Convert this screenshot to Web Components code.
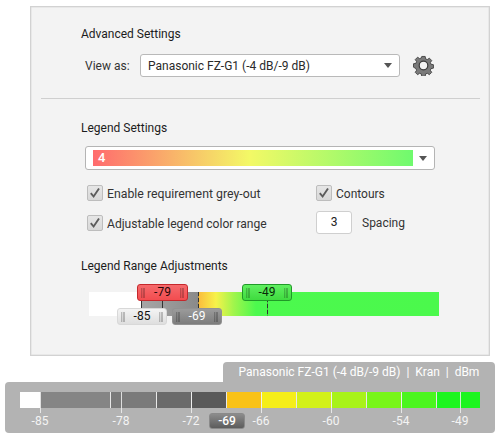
<!DOCTYPE html>
<html><head><meta charset="utf-8">
<style>
html,body{margin:0;padding:0;background:#fff}
body{width:500px;height:439px;overflow:hidden;font:12px Roboto,sans-serif;color:#222}
</style></head><body>
<settings-panel>
  <section-title style="margin:0 0 0 50px">Advanced Settings</section-title>
  <view-row></view-row>
  <hr-line></hr-line>
  <section-title style="margin:0 0 0 50px">Legend Settings</section-title>
  <legend-select></legend-select>
  <option-grid></option-grid>
  <section-title style="margin:0 0 0 50px">Legend Range Adjustments</section-title>
  <range-adjust></range-adjust>
</settings-panel>
<legend-dock></legend-dock>
<script>
function def(name,html,init){
  customElements.define(name,class extends HTMLElement{
    constructor(){super();this.attachShadow({mode:'open'}).innerHTML=typeof html==='function'?html(this):html;}
    connectedCallback(){if(init)init(this)}
  });
}
const arrow='<svg width="8" height="5" viewBox="0 0 8 5"><path d="M0 0H8L4 5Z" fill="#555"/></svg>';
def('settings-panel',`<style>:host{display:block;box-sizing:border-box;width:460px;height:350px;margin:6px 0 0 30px;padding:20px 0 0;background:#f3f3f3;border:1px solid #d2d2d2;box-shadow:inset 0 0 0 .5px #ddd}</style><slot></slot>`);
def('section-title',`<style>:host{display:block;line-height:15px;height:15px;color:#1c1c1c}</style><slot></slot>`);
def('view-row',`<style>:host{display:flex;align-items:center;height:23px;margin:12px 0 0 54px;color:#333}
.l{width:55px}
.s{box-sizing:border-box;width:260px;height:23px;background:#fff;border:1px solid #b9b9b9;border-radius:3px;display:flex;align-items:center;justify-content:space-between;padding:0 7px 0 7px;color:#2a2a2a}
svg.g{margin:-1px 0 0 13px}</style>
<span class="l">View as:</span><div class="s"><span>Panasonic FZ-G1 (-4 dB/-9 dB)</span>${arrow}</div>
<svg class="g" width="21" height="21" viewBox="0 0 21 21"><path d="M8.7 1h3.6l.5 2.6 1.7.7 2.2-1.5 2.5 2.5-1.5 2.2.7 1.7 2.6.5v3.6l-2.6.5-.7 1.7 1.5 2.2-2.5 2.5-2.2-1.5-1.7.7-.5 2.6H8.7l-.5-2.6-1.7-.7-2.2 1.5-2.5-2.5 1.5-2.2-.7-1.7L0 12.3V8.7l2.6-.5.7-1.7L1.8 4.3l2.5-2.5 2.2 1.5 1.7-.7z" fill="#7a7a7a" stroke="#3c3c3c" stroke-width=".9" transform="translate(.5 .5) scale(.95)"/><circle cx="10.5" cy="10.5" r="4.3" fill="#f3f3f3" stroke="#3c3c3c" stroke-width="1.2"/></svg>`);
def('hr-line',`<style>:host{display:block;height:1px;background:#cfcfcf;margin:21px 9px 22px 10px}</style>`);
def('legend-select',`<style>:host{box-sizing:border-box;display:flex;align-items:center;width:350px;height:24px;margin:10px 0 0 54px;padding:0 7px 0 7px;background:#fff;border:1px solid #b4b4b4;border-radius:3px;justify-content:space-between}
.g{width:320px;height:16px;line-height:16px;background:linear-gradient(90deg,#ff6b6e 0,#f3f966 49%,#6ffa6e 100%);color:#fff;font-weight:500;font-size:13px;padding-left:5px;box-sizing:border-box}</style><div class="g">4</div>${arrow}`);
def('check-box',`<style>:host{display:flex;align-items:center;gap:4px;height:16px;color:#333}
span{padding-top:2px}
.b{box-sizing:border-box;width:16px;height:16px;background:linear-gradient(#e6e6e6,#d8d8d8);border:1px solid #bdbdbd;border-radius:2px;display:block}</style>
<svg class="b" viewBox="0 0 14 14"><path d="M2.8 7.2l2.8 3.3 5.4-8" fill="none" stroke="#5c5c5c" stroke-width="1.9"/></svg><span><slot></slot></span>`);
def('option-grid',`<style>:host{display:grid;grid-template-columns:229px auto;grid-template-rows:16px 23px;row-gap:10px;margin:15px 0 25px 56px;align-items:center}
.n{display:flex;align-items:center;gap:10px;color:#333}
.i{box-sizing:border-box;width:36px;height:23px;line-height:21px;text-align:center;background:#fff;border:1px solid #cfcfcf;border-radius:3px;color:#222}</style>
<check-box style="font-size:12.3px">Enable requirement grey-out</check-box><check-box>Contours</check-box>
<check-box style="font-size:12.1px">Adjustable legend color range</check-box><div class="n"><div class="i">3</div><span>Spacing</span></div>`);
def('range-handle',h=>`<style>:host{position:absolute;box-sizing:border-box;width:50px;height:17px;border-radius:3px;display:flex;align-items:center;justify-content:space-between;padding:0 3px;line-height:15px;z-index:2}
i{width:4px;height:10px;background:linear-gradient(90deg,rgba(0,0,0,.22) 0 1.5px,rgba(0,0,0,.08) 1.5px 2.5px,rgba(0,0,0,.22) 2.5px)}</style><i></i><span><slot></slot></span><i></i>`);
def('range-adjust',`<style>:host{display:block;position:relative;width:350px;height:24px;margin:18px 0 0 58px}
.t{display:flex;height:24px;width:350px}
.w{width:52px;background:#fff}
.d{width:57px;background:linear-gradient(90deg,#a6a6a6,#8a8a8a)}
.c{flex:1;background:linear-gradient(90deg,#fbbb3c 0,#f6f24a 18px,#9ff54c 36px,#4cf94e 58px,#4bf94c 100%)}
u{position:absolute;top:0;height:24px;width:1px;background:#333;z-index:1}
.dash{background:repeating-linear-gradient(#333 0 4px,rgba(60,60,60,.35) 4px 6px)}
.a{left:48px;width:51px;top:-8px;background:linear-gradient(#f56a6c,#f24c4f);border:1px solid #c5282c;color:#2a0808}
.b{left:153px;top:-8px;background:linear-gradient(#60ef60,#3fdb3f);border:1px solid #209a28;color:#082a08}
.e{left:28px;top:16px;background:linear-gradient(#f4f4f4,#dedede);border:1px solid #d8d8d8;color:#111}
.f{left:83px;top:16px;background:linear-gradient(#9b9b9b,#7c7c7c);border:1px solid #929292;color:#fff}</style>
<div class="t"><div class="w"></div><div class="d"></div><div class="c"></div></div>
<u style="left:52px"></u><u style="left:73px"></u><u class="dash" style="left:109px"></u><u class="dash" style="left:178px"></u>
<range-handle class="e">-85</range-handle><range-handle class="f">-69</range-handle><range-handle class="a">-79</range-handle><range-handle class="b">-49</range-handle>`);
const segs=[[20,'#fff'],[71,'#858585'],[46,'#7a7a7a'],[35,'#6a6a6a'],[35,'#595959'],[35,'#f9c216'],[35,'#f5ee18'],[35,'#d2f018'],[35,'#a8f218'],[35,'#78f518'],[35,'#4bf51f'],[43,'#1cf51f']];
const labels=[[20,'-85'],[101,'-78'],[171,'-72'],[241,'-66'],[311,'-60'],[381,'-54'],[440,'-49']];
def('legend-dock',`<style>:host{display:block;position:relative;width:490px;margin:6px 0 0 5px}
.tab{box-sizing:border-box;margin-left:218px;width:272px;height:20px;background:#b3b3b3;border-radius:4px 4px 0 0;color:#fff;line-height:20px;text-align:center;white-space:pre}
.box{box-sizing:border-box;height:51px;background:#b3b3b3;border-radius:0 0 4px 4px;border-top-left-radius:4px;padding:10px 15px 0;position:relative}
.bar{display:flex;height:16px;width:460px}
.bar div{border-right:1px solid #e8e8e8;box-sizing:border-box}
.bar div:first-child{border-right:0}.bar div:last-child{border-right:0}
.ticks{position:relative;height:25px}
.ticks span{position:absolute;top:6px;transform:translateX(-50%);color:#f4f4f4;line-height:15px}
.ticks b{position:absolute;top:-16px;width:1px;height:21px;background:rgba(240,240,240,.85)}
.cur{position:absolute;left:204px;top:31px;box-sizing:border-box;width:36px;height:16px;line-height:14px;text-align:center;background:linear-gradient(#8c8c8c,#5c5c5c);border:1px solid #8a8a8a;border-radius:3px;color:#fff;font-weight:500}</style>
<div class="tab">Panasonic FZ-G1 (-4 dB/-9 dB)  |  Kran  |  dBm</div>
<div class="box"><div class="bar">${segs.map(s=>`<div style="width:${s[0]}px;background:${s[1]}"></div>`).join('')}</div>
<div class="ticks">${labels.map(l=>`<b style="left:${l[0]}px"></b><span style="left:${l[0]}px">${l[1]}</span>`).join('')}</div>
<div class="cur">-69</div></div>`);
</script>
</body></html>
